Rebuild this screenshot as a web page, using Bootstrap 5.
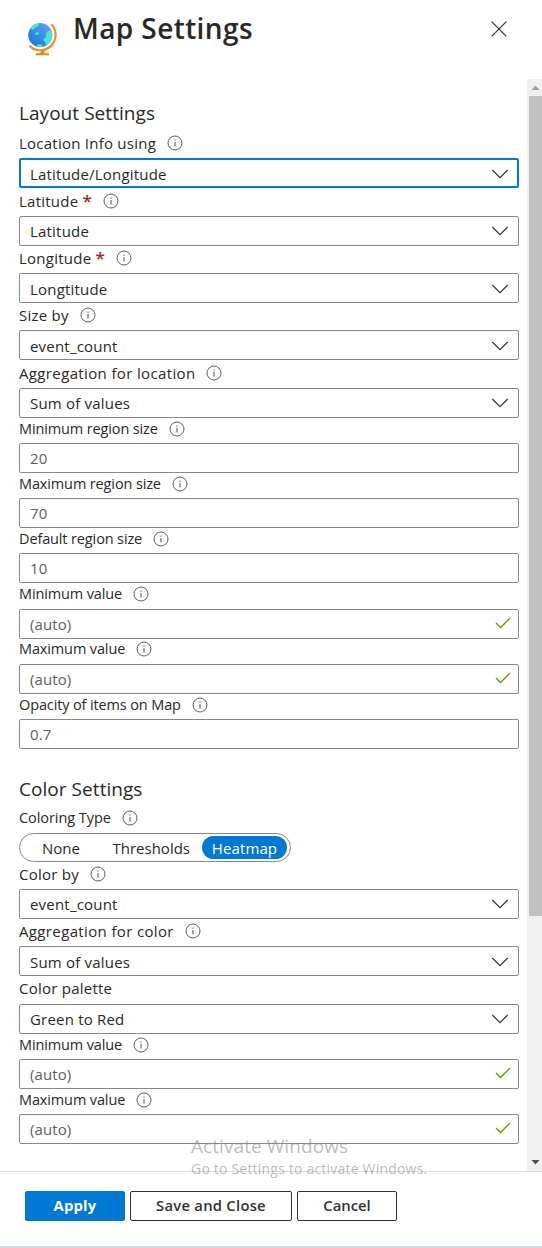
<!DOCTYPE html>
<html lang="en">
<head>
<meta charset="utf-8">
<meta name="viewport" content="width=device-width, initial-scale=1">
<title>Map Settings</title>
<link href="https://cdn.jsdelivr.net/npm/bootstrap@5.3.0/dist/css/bootstrap.min.css" rel="stylesheet">
<style>
  body { font-family: "Open Sans", "Noto Sans", sans-serif; font-size: 15px; color: #292827; background: #fff; }
  .panel { height: 1248px; border-bottom: 2px solid #d0dbeb; }
  .panel-head { height: 79px; padding: 9px 35px 0 27px; }
  .panel-title { font-size: 28px; font-weight: 600; line-height: 38px; margin: 0 0 0 16px; letter-spacing: .4px; }
  .globe { margin-top: 9px; }
  .close-btn { margin-top: 12px; width: 16px; height: 16px; line-height: 0; }
  .panel-body { height: 1092px; }
  .fields { padding: 19.4px 8px 0 19px; }
  .section-title { font-size: 19px; line-height: 30px; font-weight: 400; margin: 0; letter-spacing: .05px; }
  .caption { height: 27.35px; padding-bottom: 3.2px; }
  .caption > span { line-height: 24px; font-size: 15px; letter-spacing: .24px; white-space: nowrap; }
  .caption.loose > span { letter-spacing: .36px; }
  .caption-first { height: 30px; }
  .caption-sm { height: 25.2px; padding-bottom: 2.3px; }
  .caption-sm > span { font-size: 14.5px; letter-spacing: -.13px; }
  .caption-type { height: 28.7px; padding-bottom: 2.3px; }
  .caption-type > span { font-size: 14.5px; letter-spacing: -.06px; }
  .caption svg { margin-left: 11px; }
  .req { color: #a4262c; font-weight: 600; font-size: 17px; line-height: 1; }
  .box { height: 30px; border: 1px solid #8a8886; border-radius: 2px; padding: 1px 9px 0 10px; letter-spacing: .2px; line-height: 26px; }
  .box.hint { color: #605e5c; letter-spacing: .1px; padding-right: 7px; }
  .box.hint svg { margin-top: -3px; }
  .box.active { border: 2px solid #0078d4; padding: 2px 8px 0 9px; }
  .pills { width: 272px; height: 29px; border: 1px solid #8a8886; border-radius: 15px; padding: 2px 3px 0 22px; line-height: 25px; }
  .pills .mid { margin-right: 12px; }
  .pills .on { background: #0078d4; color: #fff; border-radius: 12px; height: 23px; line-height: 25px; width: 85px; text-align: center; letter-spacing: .1px; }
  .color-title { margin-top: 25px; }
  .track { width: 15px; background: #f0f0f0; }
  .thumb { width: 13px; height: 820px; background: #c1c1c1; margin-left: 2px; }
  .arrow { height: 17px; }
  .panel-foot { border-top: 1px solid #dcdcdc; padding: 19px 25px; gap: 5px; }
  .panel-foot .btn { height: 30px; border-radius: 2px; font-size: 14.8px; font-weight: 600; line-height: 26px; padding: 0 0 2px; color: #323130; border: 1px solid #323130; width: 100px; }
  .panel-foot .btn.wide { width: 162px; letter-spacing: .25px; }
  .panel-foot .btn.main { background: #0078d4; border-color: #0078d4; color: #fff; font-weight: 700; letter-spacing: .2px; }
  .watermark { left: 191px; top: 1134px; color: rgba(130,130,130,.55); font-size: 14px; line-height: 20px; letter-spacing: .2px; white-space: nowrap; }
  .watermark .big { font-size: 19px; line-height: 25px; letter-spacing: .07px; }
</style>
</head>
<body>
<svg width="0" height="0" class="position-absolute">
  <symbol id="info" viewBox="0 0 16 16"><circle cx="8" cy="8" r="7" fill="none" stroke="#605e5c" stroke-width="1"/><path d="M8 6.9V11.5M8 4.5V5.7" stroke="#605e5c" stroke-width="1.1"/></symbol>
  <symbol id="chev" viewBox="0 0 18 10"><path d="M1.3 1 9 8.7 16.7 1" fill="none" stroke="#323130" stroke-width="1.2"/></symbol>
  <symbol id="tick" viewBox="0 0 16 12"><path d="M1 6 5.5 10.5 15 1" fill="none" stroke="#57a300" stroke-width="1.3"/></symbol>
</svg>
<div class="panel d-flex flex-column position-relative">
  <header class="panel-head d-flex align-items-start">
    <svg class="globe" width="30" height="39" viewBox="0 0 30 39">
      <defs><linearGradient id="sea" x1="1" y1="0" x2="0" y2="1"><stop offset="0" stop-color="#6aa5f5"/><stop offset="1" stop-color="#0a78d8"/></linearGradient>
      <clipPath id="ball"><circle cx="13.3" cy="17" r="12"/></clipPath></defs>
      <circle cx="13.3" cy="17" r="12" fill="url(#sea)"/>
      <g fill="#45e8ca" clip-path="url(#ball)"><path d="M3 10.500 7 5h4.500c.8 2.500-.5 4-2 4-1.500.3-1.500 1.700-2.500 2.200-1.500.7-3 .3-4-.7z"/><circle cx="9.900" cy="15.600" r="1.700"/><path d="M20 14c2-2 5-1.500 6-.5v7l-5 7c-2.500-.5-2-2.500-3.500-4 0-1-1.500-1-1-2.500 1-1.500 2-.5 2.500-2-.5-2 0-4 1-5zM9 29l1.500-2.500 3.500-.3 2 2.800z"/></g>
      <path d="M24.200 6.300a15 15 0 0 1-21.700 21.400" fill="none" stroke="#f58d20" stroke-width="2.200"/>
      <path d="M14.500 32.500h2l1.400 2.800h4.100v2H8.800v-2h4.300z" fill="#ef8519"/>
    </svg>
    <h1 class="panel-title">Map Settings</h1>
    <div class="close-btn ms-auto"><svg width="16" height="16" viewBox="0 0 16 16"><path d="m.7.7 14.600 14.600M15.300.7.7 15.300" stroke="#323130" stroke-width="1.200"/></svg></div>
  </header>

  <main class="panel-body d-flex">
    <div class="fields flex-grow-1">
      <h2 class="section-title">Layout Settings</h2>
      <div class="caption caption-first d-flex align-items-end"><span>Location Info using</span><svg width="16" height="24"><use href="#info"/></svg></div>
      <div class="box active d-flex justify-content-between align-items-center"><span>Latitude/Longitude</span><svg width="18" height="10"><use href="#chev"/></svg></div>
      <div class="caption d-flex align-items-end"><span>Latitude <b class="req">*</b></span><svg width="16" height="24"><use href="#info"/></svg></div>
      <div class="box d-flex justify-content-between align-items-center"><span>Latitude</span><svg width="18" height="10"><use href="#chev"/></svg></div>
      <div class="caption d-flex align-items-end"><span>Longitude <b class="req">*</b></span><svg width="16" height="24"><use href="#info"/></svg></div>
      <div class="box d-flex justify-content-between align-items-center"><span>Longtitude</span><svg width="18" height="10"><use href="#chev"/></svg></div>
      <div class="caption d-flex align-items-end"><span>Size by</span><svg width="16" height="24"><use href="#info"/></svg></div>
      <div class="box d-flex justify-content-between align-items-center"><span>event_count</span><svg width="18" height="10"><use href="#chev"/></svg></div>
      <div class="caption loose d-flex align-items-end"><span>Aggregation for location</span><svg width="16" height="24"><use href="#info"/></svg></div>
      <div class="box d-flex justify-content-between align-items-center"><span>Sum of values</span><svg width="18" height="10"><use href="#chev"/></svg></div>
      <div class="caption caption-sm d-flex align-items-end"><span>Minimum region size</span><svg width="16" height="24"><use href="#info"/></svg></div>
      <div class="box hint">20</div>
      <div class="caption caption-sm d-flex align-items-end"><span>Maximum region size</span><svg width="16" height="24"><use href="#info"/></svg></div>
      <div class="box hint">70</div>
      <div class="caption caption-sm d-flex align-items-end"><span>Default region size</span><svg width="16" height="24"><use href="#info"/></svg></div>
      <div class="box hint">10</div>
      <div class="caption caption-sm d-flex align-items-end"><span>Minimum value</span><svg width="16" height="24"><use href="#info"/></svg></div>
      <div class="box hint d-flex justify-content-between align-items-center"><span>(auto)</span><svg width="16" height="12"><use href="#tick"/></svg></div>
      <div class="caption caption-sm d-flex align-items-end"><span>Maximum value</span><svg width="16" height="24"><use href="#info"/></svg></div>
      <div class="box hint d-flex justify-content-between align-items-center"><span>(auto)</span><svg width="16" height="12"><use href="#tick"/></svg></div>
      <div class="caption caption-sm d-flex align-items-end"><span>Opacity of items on Map</span><svg width="16" height="24"><use href="#info"/></svg></div>
      <div class="box hint">0.7</div>

      <h2 class="section-title color-title">Color Settings</h2>
      <div class="caption caption-type d-flex align-items-end"><span>Coloring Type</span><svg width="16" height="24"><use href="#info"/></svg></div>
      <div class="pills d-flex"><span>None</span><span class="mid ms-auto">Thresholds</span><span class="on">Heatmap</span></div>
      <div class="caption d-flex align-items-end"><span>Color by</span><svg width="16" height="24"><use href="#info"/></svg></div>
      <div class="box d-flex justify-content-between align-items-center"><span>event_count</span><svg width="18" height="10"><use href="#chev"/></svg></div>
      <div class="caption loose d-flex align-items-end"><span>Aggregation for color</span><svg width="16" height="24"><use href="#info"/></svg></div>
      <div class="box d-flex justify-content-between align-items-center"><span>Sum of values</span><svg width="18" height="10"><use href="#chev"/></svg></div>
      <div class="caption d-flex align-items-end"><span>Color palette</span></div>
      <div class="box d-flex justify-content-between align-items-center"><span>Green to Red</span><svg width="18" height="10"><use href="#chev"/></svg></div>
      <div class="caption caption-sm d-flex align-items-end"><span>Minimum value</span><svg width="16" height="24"><use href="#info"/></svg></div>
      <div class="box hint d-flex justify-content-between align-items-center"><span>(auto)</span><svg width="16" height="12"><use href="#tick"/></svg></div>
      <div class="caption caption-sm d-flex align-items-end"><span>Maximum value</span><svg width="16" height="24"><use href="#info"/></svg></div>
      <div class="box hint d-flex justify-content-between align-items-center"><span>(auto)</span><svg width="16" height="12"><use href="#tick"/></svg></div>
    </div>
    <div class="track d-flex flex-column flex-shrink-0">
      <svg class="arrow" width="15" height="17"><path d="M4.500 11h8L8.500 6.500z" fill="#a0a0a0"/></svg>
      <div class="thumb"></div>
      <svg class="arrow mt-auto" width="15" height="17"><path d="M4.500 6h8L8.500 10.500z" fill="#505050"/></svg>
    </div>
  </main>

  <footer class="panel-foot d-flex flex-grow-1">
    <button class="btn main">Apply</button>
    <button class="btn wide">Save and Close</button>
    <button class="btn">Cancel</button>
  </footer>
  <div class="watermark position-absolute"><div class="big">Activate Windows</div><div>Go to Settings to activate Windows.</div></div>
</div>
<script src="https://cdn.jsdelivr.net/npm/bootstrap@5.3.0/dist/js/bootstrap.bundle.min.js"></script>
</body>
</html>
